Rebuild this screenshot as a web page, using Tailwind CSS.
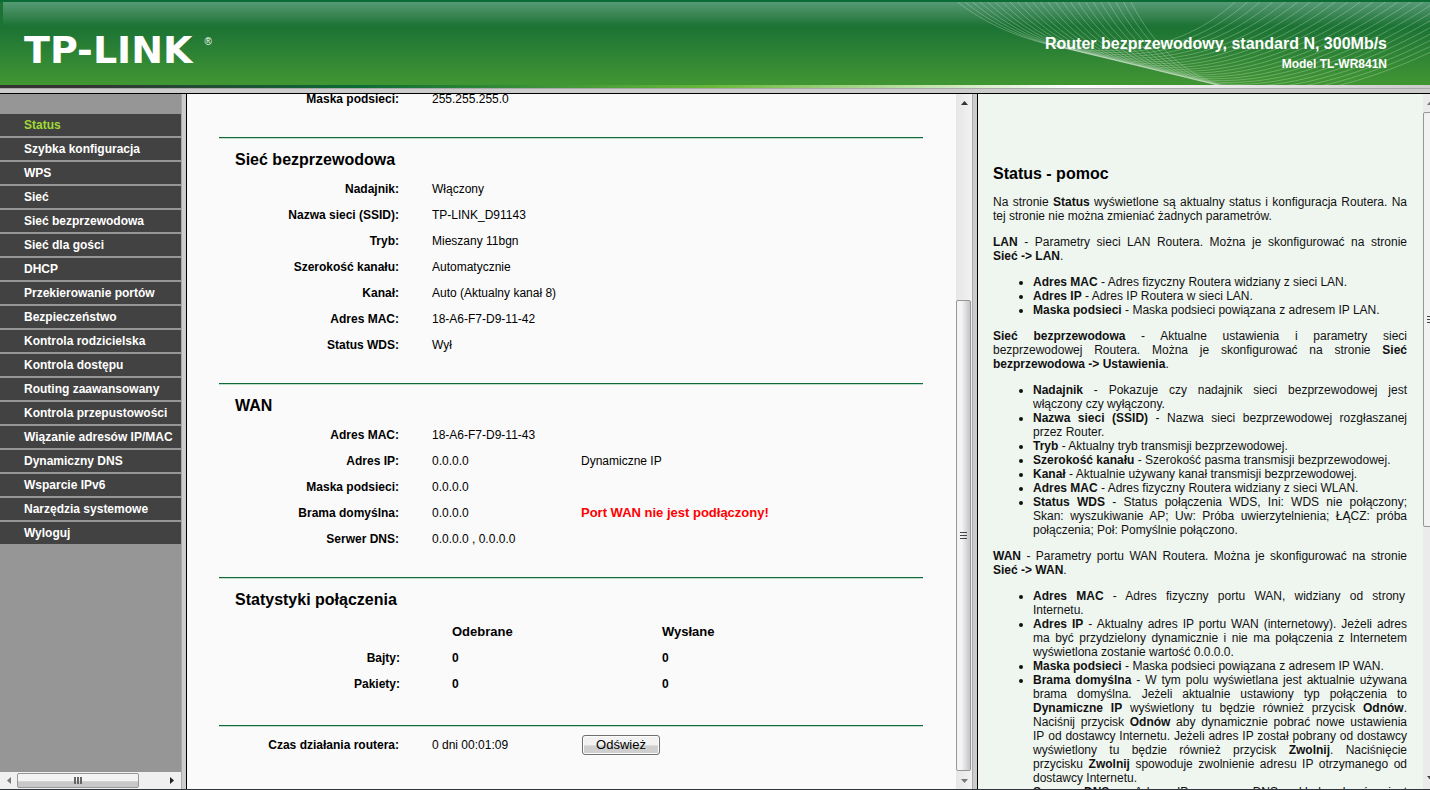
<!DOCTYPE html>
<html lang="pl">
<head>
    <meta charset="UTF-8">
    <meta name="viewport" content="width=device-width, initial-scale=1.0">
    <title>TL-WR841N</title>
    <script src="https://cdn.jsdelivr.net/npm/@tailwindcss/browser@4"></script>
</head>

<body class="h-screen flex flex-col overflow-hidden bg-[#fafafa] text-black text-[12px] leading-[14px] font-['Liberation_Sans',Arial,sans-serif]">

    <!-- Banner -->
    <header class="shrink-0">
        <div class="relative h-[85px] overflow-hidden flex items-center justify-between pl-6 pr-[43px] text-white bg-linear-to-b from-[#1b7334] from-30% to-[#419633] border-t-2 border-[#0b6b35]">
            <div class="absolute top-0 left-[3px] right-0 h-6 bg-linear-to-b from-[#559a75] to-[#1b7334]"></div>
            <svg class="absolute -top-0.5 right-0 w-[490px] h-[85px]" viewBox="940 0 490 85" fill="none" stroke="#fff" stroke-opacity=".25" id="waves"></svg>
            <div class="relative flex items-start gap-3 pt-3">
                <span class="text-[38px] leading-10 font-bold font-['DejaVu_Sans',sans-serif]">TP-LINK</span>
                <span class="text-[10px] leading-4 pt-1">®</span>
            </div>
            <div class="relative text-right font-bold pt-5">
                <p class="text-[16px] leading-5">Router bezprzewodowy, standard N, 300Mb/s</p>
                <p class="leading-5">Model TL-WR841N</p>
            </div>
        </div>
        <div class="h-[3px] bg-[linear-gradient(to_right,#333_0%,#333_6%,#0b6b35_25%,#6ab83a_50%,#fff_75%,#ccc_100%)]"></div>
        <div class="h-1.5 bg-[#ccc] border-t border-[#aaa] border-b border-b-black"></div>
    </header>

    <div class="flex flex-1 min-h-0 border-b border-[#30343c]">

        <!-- Menu -->
        <nav class="w-[181px] shrink-0 flex flex-col bg-[#969696]">
            <ul class="flex-1 pt-5 flex flex-col gap-0.5 text-white font-bold leading-[22px] whitespace-nowrap">
                <li class="bg-[#424242] pl-6"><a href="#" class="text-[#a0d936]">Status</a></li>
                <li class="bg-[#424242] pl-6"><a href="#">Szybka konfiguracja</a></li>
                <li class="bg-[#424242] pl-6"><a href="#">WPS</a></li>
                <li class="bg-[#424242] pl-6"><a href="#">Sieć</a></li>
                <li class="bg-[#424242] pl-6"><a href="#">Sieć bezprzewodowa</a></li>
                <li class="bg-[#424242] pl-6"><a href="#">Sieć dla gości</a></li>
                <li class="bg-[#424242] pl-6"><a href="#">DHCP</a></li>
                <li class="bg-[#424242] pl-6"><a href="#">Przekierowanie portów</a></li>
                <li class="bg-[#424242] pl-6"><a href="#">Bezpieczeństwo</a></li>
                <li class="bg-[#424242] pl-6"><a href="#">Kontrola rodzicielska</a></li>
                <li class="bg-[#424242] pl-6"><a href="#">Kontrola dostępu</a></li>
                <li class="bg-[#424242] pl-6"><a href="#">Routing zaawansowany</a></li>
                <li class="bg-[#424242] pl-6"><a href="#">Kontrola przepustowości</a></li>
                <li class="bg-[#424242] pl-6"><a href="#">Wiązanie adresów IP/MAC</a></li>
                <li class="bg-[#424242] pl-6"><a href="#">Dynamiczny DNS</a></li>
                <li class="bg-[#424242] pl-6"><a href="#">Wsparcie IPv6</a></li>
                <li class="bg-[#424242] pl-6"><a href="#">Narzędzia systemowe</a></li>
                <li class="bg-[#424242] pl-6"><a href="#">Wyloguj</a></li>
            </ul>
            <div class="h-[17px] shrink-0 flex items-center bg-[#f0f0f0]">
                <div class="w-[17px] flex justify-center"><svg class="w-1 h-[7px]" viewBox="0 0 4 7"><path d="M4 0v7L0 3.500z" fill="#777"/></svg></div>
                <div class="w-[122px] h-[15px] rounded-xs border border-[#979797] bg-linear-to-b from-[#f4f4f4] from-50% to-[#c8c8cb] to-60% flex items-center justify-center">
                    <svg class="w-2 h-[7px]" viewBox="0 0 8 7"><path d="M0 0h2v7H0zM3 0h2v7H3zM6 0h2v7H6z" fill="#666"/></svg>
                </div>
                <div class="flex-1 flex justify-end pr-[7px]"><svg class="w-1 h-[7px]" viewBox="0 0 4 7"><path d="M0 0v7l4-3.500z" fill="#222"/></svg></div>
            </div>
        </nav>
        <div class="w-1.5 shrink-0 bg-[#ccc] border-l border-[#aaa] border-r border-r-black"></div>

        <!-- Status page -->
        <main class="flex-1 min-w-0 overflow-hidden pl-8 pr-[33px] bg-[#fafafa]">
            <table class="w-full table-fixed -mt-2 mb-[25px]">
                <tbody>
                    <tr class="h-[26px]"><th class="w-[180px] text-right">Maska podsieci:</th><td class="pl-[33px]">255.255.255.0</td></tr>
                </tbody>
            </table>

            <section class="border-t border-[#0f6b39] pb-[25px] shadow-[inset_0_1px_0_#bfdccb]">
                <h2 class="pt-1.5 pl-4 text-[16px] leading-8 font-bold">Sieć bezprzewodowa</h2>
                <table class="w-full table-fixed">
                    <tbody>
                        <tr class="h-[26px]"><th class="w-[180px] text-right">Nadajnik:</th><td class="pl-[33px]">Włączony</td></tr>
                        <tr class="h-[26px]"><th class="text-right">Nazwa sieci (SSID):</th><td class="pl-[33px]">TP-LINK_D91143</td></tr>
                        <tr class="h-[26px]"><th class="text-right">Tryb:</th><td class="pl-[33px]">Mieszany 11bgn</td></tr>
                        <tr class="h-[26px]"><th class="text-right">Szerokość kanału:</th><td class="pl-[33px]">Automatycznie</td></tr>
                        <tr class="h-[26px]"><th class="text-right">Kanał:</th><td class="pl-[33px]">Auto (Aktualny kanał 8)</td></tr>
                        <tr class="h-[26px]"><th class="text-right">Adres MAC:</th><td class="pl-[33px]">18-A6-F7-D9-11-42</td></tr>
                        <tr class="h-[26px]"><th class="text-right">Status WDS:</th><td class="pl-[33px]">Wył</td></tr>
                    </tbody>
                </table>
            </section>

            <section class="border-t border-[#0f6b39] pb-[25px] shadow-[inset_0_1px_0_#bfdccb]">
                <h2 class="pt-1.5 pl-4 text-[16px] leading-8 font-bold">WAN</h2>
                <table class="w-full table-fixed">
                    <tbody>
                        <tr class="h-[26px]"><th class="w-[180px] text-right">Adres MAC:</th><td class="w-[182px] pl-[33px]">18-A6-F7-D9-11-43</td><td></td></tr>
                        <tr class="h-[26px]"><th class="text-right">Adres IP:</th><td class="pl-[33px]">0.0.0.0</td><td>Dynamiczne IP</td></tr>
                        <tr class="h-[26px]"><th class="text-right">Maska podsieci:</th><td class="pl-[33px]">0.0.0.0</td><td></td></tr>
                        <tr class="h-[26px]"><th class="text-right">Brama domyślna:</th><td class="pl-[33px]">0.0.0.0</td><td class="text-[13px] font-bold text-[#f00]">Port WAN nie jest podłączony!</td></tr>
                        <tr class="h-[26px]"><th class="text-right">Serwer DNS:</th><td class="pl-[33px]">0.0.0.0 , 0.0.0.0</td><td></td></tr>
                    </tbody>
                </table>
            </section>

            <section class="border-t border-[#0f6b39] pb-7 shadow-[inset_0_1px_0_#bfdccb]">
                <h2 class="pt-1.5 pb-[3px] pl-4 text-[16px] leading-8 font-bold">Statystyki połączenia</h2>
                <table class="w-full table-fixed font-bold text-left">
                    <thead>
                        <tr class="h-[26px] text-[13px]"><td class="w-[181px]"></td><th class="w-[262px] pl-[52px]">Odebrane</th><th>Wysłane</th></tr>
                    </thead>
                    <tbody>
                        <tr class="h-[26px]"><th class="text-right">Bajty:</th><td class="pl-[52px]">0</td><td>0</td></tr>
                        <tr class="h-[26px]"><th class="text-right">Pakiety:</th><td class="pl-[52px]">0</td><td>0</td></tr>
                    </tbody>
                </table>
            </section>

            <section class="border-t border-[#0f6b39] pt-1.5 shadow-[inset_0_1px_0_#bfdccb]">
                <table class="w-full table-fixed">
                    <tbody>
                        <tr class="h-[26px]">
                            <th class="w-[180px] text-right">Czas działania routera:</th>
                            <td class="w-[183px] pl-[33px]">0 dni 00:01:09</td>
                            <td><button class="block w-[78px] h-5 rounded-[3px] border border-[#707070] bg-linear-to-b from-[#f2f2f2] from-50% to-[#cfcfcf] to-55% text-[13px] leading-4 shadow-[inset_0_0_0_1px_#fcfcfc]">Odśwież</button></td>
                        </tr>
                    </tbody>
                </table>
            </section>
        </main>

        <div class="w-4 shrink-0 flex flex-col items-center bg-linear-to-r from-[#e6e6e6] to-[#f2f2f2]">
            <div class="h-[206px] pt-[7px]"><svg class="w-[7px] h-1" viewBox="0 0 7 4"><path d="M3.500 0L7 4H0z" fill="#333"/></svg></div>
            <div class="w-[15px] flex-1 self-start rounded-xs border border-[#979797] bg-linear-to-r from-[#f4f4f4] from-35% to-[#c4c4c9] flex items-center justify-center">
                <svg class="w-[7px] h-2" viewBox="0 0 7 8"><path d="M0 0h7v1H0zM0 3h7v1H0zM0 6h7v1H0z" fill="#444"/></svg>
            </div>
            <div class="h-[18px] pt-2"><svg class="w-[7px] h-1" viewBox="0 0 7 4"><path d="M0 0h7L3.500 4z" fill="#777"/></svg></div>
        </div>
        <div class="w-1.5 shrink-0 bg-[#ccc] border-l border-[#aaa] border-r border-r-black"></div>

        <!-- Help -->
        <aside class="w-[445px] shrink-0 overflow-hidden pl-[15px] pr-4 pt-[70px] text-justify text-[#111] bg-[#eff6f0]">
            <h2 class="mb-[11px] text-[16px] leading-5 font-bold text-black">Status - pomoc</h2>
            <p class="mb-3">Na stronie <b>Status</b> wyświetlone są aktualny status i konfiguracja Routera. Na tej stronie nie można zmieniać żadnych parametrów.</p>
            <p class="mb-3"><b>LAN</b> - Parametry sieci LAN Routera. Można je skonfigurować na stronie <b>Sieć&nbsp;-&gt; LAN</b>.</p>
            <ul class="mb-3 pl-10 list-disc">
                <li><b>Adres MAC</b> - Adres fizyczny Routera widziany z sieci LAN.</li>
                <li><b>Adres IP</b> - Adres IP Routera w sieci LAN.</li>
                <li><b>Maska podsieci</b> - Maska podsieci powiązana z adresem IP LAN.</li>
            </ul>
            <p class="mb-3"><b>Sieć bezprzewodowa</b> - Aktualne ustawienia i parametry sieci bezprzewodowej Routera. Można je skonfigurować na stronie <b>Sieć bezprzewodowa -&gt; Ustawienia</b>.</p>
            <ul class="mb-3 pl-10 list-disc">
                <li><b>Nadajnik</b> - Pokazuje czy nadajnik sieci bezprzewodowej jest włączony czy wyłączony.</li>
                <li><b>Nazwa sieci (SSID)</b> - Nazwa sieci bezprzewodowej rozgłaszanej przez Router.</li>
                <li><b>Tryb</b> - Aktualny tryb transmisji bezprzewodowej.</li>
                <li><b>Szerokość kanału</b> - Szerokość pasma transmisji bezprzewodowej.</li>
                <li><b>Kanał</b> - Aktualnie używany kanał transmisji bezprzewodowej.</li>
                <li><b>Adres MAC</b> - Adres fizyczny Routera widziany z sieci WLAN.</li>
                <li><b>Status WDS</b> - Status połączenia WDS, Ini: WDS nie połączony; Skan:&nbsp;wyszukiwanie AP; Uw: Próba uwierzytelnienia; ŁĄCZ: próba połączenia; Poł: Pomyślnie połączono.</li>
            </ul>
            <p class="mb-3"><b>WAN</b> - Parametry portu WAN Routera. Można je skonfigurować na stronie <b>Sieć -&gt; WAN</b>.</p>
            <ul class="pl-10 list-disc">
                <li class="pr-0.5"><b>Adres MAC</b> - Adres fizyczny portu WAN, widziany od strony Internetu.</li>
                <li><b>Adres IP</b> - Aktualny adres IP portu WAN (internetowy). Jeżeli adres ma być przydzielony dynamicznie i nie ma połączenia z Internetem wyświetlona zostanie wartość 0.0.0.0.</li>
                <li><b>Maska podsieci</b> - Maska podsieci powiązana z adresem IP WAN.</li>
                <li><b>Brama domyślna</b> - W tym polu wyświetlana jest aktualnie używana brama domyślna. Jeżeli aktualnie ustawiony typ połączenia to <b>Dynamiczne IP</b> wyświetlony tu będzie również przycisk <b>Odnów</b>. Naciśnij przycisk <b>Odnów</b> aby dynamicznie pobrać nowe ustawienia IP&nbsp;od dostawcy Internetu. Jeżeli adres IP został pobrany od dostawcy wyświetlony tu będzie również przycisk <b>Zwolnij</b>. Naciśnięcie przycisku&nbsp;<b>Zwolnij</b> spowoduje zwolnienie adresu IP otrzymanego od dostawcy&nbsp;Internetu.</li>
                <li><b>Serwer DNS</b> - Adres IP serwera DNS, układ adresów jest przydzielany przez dostawcę Internetu.</li>
            </ul>
        </aside>
        <div class="w-[7px] shrink-0 overflow-hidden flex flex-col bg-[#ebebeb]">
            <div class="h-[18px] pt-[7px] pl-1"><svg class="w-[7px] h-1" viewBox="0 0 7 4"><path d="M3.500 0L7 4H0z" fill="#777"/></svg></div>
            <div class="h-[415px] w-[15px] shrink-0 pl-[3px] rounded-xs border border-[#979797] bg-[#f2f2f2] flex items-center">
                <svg class="w-[7px] h-2" viewBox="0 0 7 8"><path d="M0 0h7v1H0zM0 3h7v1H0zM0 6h7v1H0z" fill="#444"/></svg>
            </div>
            <div class="mt-auto h-[13px] pl-1"><svg class="w-[7px] h-1" viewBox="0 0 7 4"><path d="M0 0h7L3.500 4z" fill="#444"/></svg></div>
        </div>
    </div>

    <script>
        // Fan of thin U-shaped curves in the right part of the banner
        const waves = document.getElementById('waves');
        let lines = '';
        for (let i = 0; i < 24; i++) {
            const t = i / 23;
            lines += `<path d="M${955 + 175 * t} 0C${1030 + 165 * t} ${60 + 70 * t} ${1160 + 170 * t} ${75 + 45 * t} ${1237 + 290 * t} 0"/>`;
        }
        waves.innerHTML = lines;
    </script>
</body>
</html>
